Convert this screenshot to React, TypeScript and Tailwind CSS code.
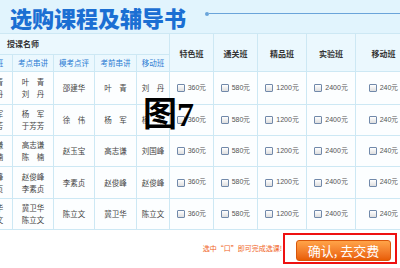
const rows = [
  { a: ["叶　青", "刘　丹"], b: "邵建华", c: "叶　青", d: "刘　丹", h: "h-[33px]" },
  { a: ["杨　军", "于芳芳"], b: "徐　伟", c: "杨　军", d: "杨　军", h: "h-[31px]" },
  { a: ["高志谦", "陈　楠"], b: "赵玉宝", c: "高志谦", d: "刘国峰", h: "h-[31px]" },
  { a: ["赵俊峰", "李素贞"], b: "李素贞", c: "赵俊峰", d: "赵俊峰", h: "h-[32px]" },
  { a: ["冀卫华", "陈立文"], b: "陈立文", c: "冀卫华", d: "陈立文", h: "h-[31px]" },
];

const prices = ["360元", "580元", "1200元", "2400元", "240元"];
const classes = ["特色班", "通关班", "精品班", "实验班", "移动班"];
const subHeads = ["面授班", "考点串讲", "模考点评", "考前串讲", "移动班"];

function PriceCell({ price }: { price: string }) {
  return (
    <td className="border border-[#cde8f4] bg-[#fcfeff]">
      <div className="flex items-center justify-center gap-[3px]">
        <span className="w-[8px] h-[8px] border border-[#7189aa] rounded-[1px] bg-gradient-to-b from-white to-[#dedede]" />
        <span className="text-[7px] text-[#555] font-['Liberation_Sans']">{price}</span>
      </div>
    </td>
  );
}

export default function App() {
  return (
    <div className="relative w-[400px] h-[268px] overflow-hidden bg-white font-['Noto_Sans_CJK_SC',sans-serif]">
      {/* title band */}
      <div className="h-[33px] flex items-center bg-[#e1f4fd]">
        <h1 className="pl-[10px] text-[22px] leading-none font-black text-[#1b6fd3]">
          选购课程及辅导书
        </h1>
        <div className="flex-1 flex items-center ml-[19px] -mt-[6px]">
          <span className="w-[4px] h-[4px] rounded-full bg-[#6aa4da]" />
          <span className="flex-1 h-px bg-[#6aa4da]" />
        </div>
      </div>

      <table className="table-fixed border-collapse ml-[-29px] w-[440px]">
        <colgroup>
          <col className="w-[41px]" />
          <col className="w-[41px]" />
          <col className="w-[41px]" />
          <col className="w-[42px]" />
          <col className="w-[33px]" />
          <col className="w-[44px]" />
          <col className="w-[44px]" />
          <col className="w-[49px]" />
          <col className="w-[49px]" />
          <col className="w-[56px]" />
        </colgroup>
        <thead className="bg-[#ebf8fe]">
          <tr className="h-[21px]">
            <th
              colSpan={5}
              className="border border-[#cde8f4] text-left pl-[35px] text-[8px] font-bold text-[#333]"
            >
              授课名师
            </th>
            {classes.map((c) => (
              <th
                key={c}
                rowSpan={2}
                className="border border-[#cde8f4] text-[8px] font-bold text-[#333] pt-[2px]"
              >
                {c}
              </th>
            ))}
          </tr>
          <tr className="h-[17px]">
            {subHeads.map((s) => (
              <th key={s} className="border border-[#cde8f4] text-[7.5px] font-normal text-[#2b7cd3]">
                {s}
              </th>
            ))}
          </tr>
        </thead>
        <tbody className="text-[7.5px] text-[#444] text-center">
          {rows.map((r, i) => (
            <tr key={i} className={r.h}>
              <td className="border border-[#cde8f4] bg-[#fcfeff] leading-[12px]">
                {r.a[0]}
                <br />
                {r.a[1]}
              </td>
              <td className="border border-[#cde8f4] bg-[#fcfeff] leading-[12px]">
                {r.a[0]}
                <br />
                {r.a[1]}
              </td>
              <td className="border border-[#cde8f4] bg-[#fcfeff]">{r.b}</td>
              <td className="border border-[#cde8f4] bg-[#fcfeff]">{r.c}</td>
              <td className="border border-[#cde8f4] bg-[#fcfeff]">{r.d}</td>
              {prices.map((p) => (
                <PriceCell key={p} price={p} />
              ))}
            </tr>
          ))}
        </tbody>
      </table>

      {/* footer */}
      <div className="flex items-center justify-end pr-[3px] mt-[3px]">
        <span className="text-[7px] text-[#f0621c] mr-[1px]">选中“口”即可完成选课!</span>
        <div className="w-[114px] h-[31px] border-2 border-[#ee1111] flex items-start pl-[11px] pt-[5px]">
          <button className="w-[95px] h-[21px] rounded-[3px] border border-[#d9560a] bg-gradient-to-b from-[#ffa448] to-[#e85c02] text-white text-[13px] leading-none">
            确认, 去交费
          </button>
        </div>
      </div>

      {/* watermark label */}
      <div className="absolute left-[143px] top-[98px] text-[34px] font-bold leading-none text-black font-['Liberation_Serif','Noto_Sans_CJK_SC',serif]">
        图7
      </div>
    </div>
  );
}
